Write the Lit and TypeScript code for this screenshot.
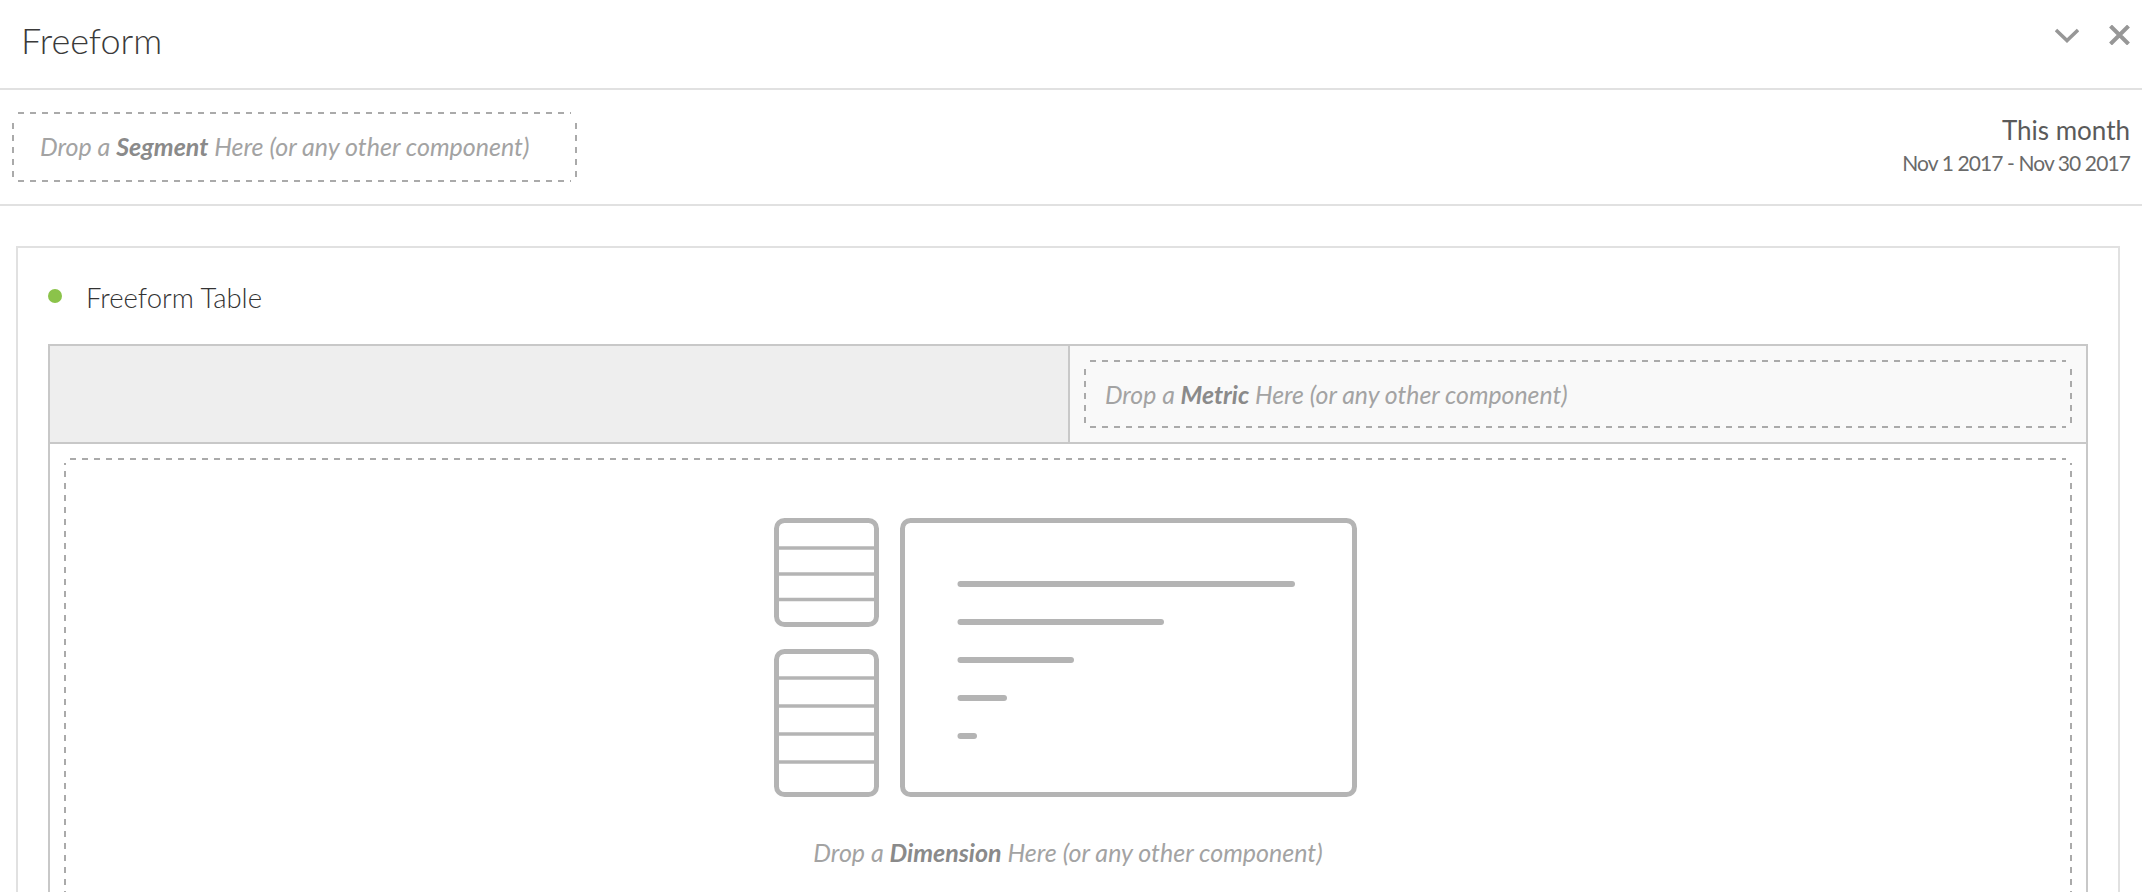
import { LitElement, html, css, svg } from "lit";
import { customElement } from "lit/decorators.js";

const dropLabel = (what: string) =>
  html`Drop a <b>${what}</b> Here (or any other component)`;

@customElement("app-root")
export class AppRoot extends LitElement {
  static styles = css`
    :host {
      display: block;
      width: 2142px;
      height: 892px;
      overflow: hidden;
      background: #fff;
      font-family: "Lato", "Open Sans", sans-serif;
      color: #3a3a3a;
    }
    .title-bar {
      box-sizing: border-box;
      height: 90px;
      border-bottom: 2px solid #e1e1e1;
      display: flex;
      align-items: flex-start;
      justify-content: space-between;
      padding: 19px 12px 0 21px;
    }
    .title {
      font-size: 36px;
      line-height: 42px;
      font-weight: 300;
    }
    .actions {
      display: flex;
      gap: 30px;
      align-items: flex-start;
      padding-top: 6px;
    }
    .actions svg {
      display: block;
    }
    .chevron {
      margin-top: 3px;
    }
    .filter-bar {
      box-sizing: border-box;
      height: 116px;
      border-bottom: 2px solid #e1e1e1;
      display: flex;
      justify-content: space-between;
      align-items: flex-start;
      padding: 22px 12px 0 12px;
    }
    .drop {
      box-sizing: border-box;
      font-style: italic;
      font-size: 25px;
      color: #a3a3a3;
      white-space: nowrap;
      background-image:
        repeating-linear-gradient(90deg, #aaa 0 6px, transparent 6px 12px),
        repeating-linear-gradient(90deg, #aaa 0 6px, transparent 6px 12px),
        repeating-linear-gradient(0deg, #aaa 0 6px, transparent 6px 12px),
        repeating-linear-gradient(0deg, #aaa 0 6px, transparent 6px 12px);
      background-repeat: no-repeat;
      background-size:
        calc(100% - 12px) 2px,
        calc(100% - 12px) 2px,
        2px calc(100% - 10px),
        2px calc(100% - 10px);
      background-position:
        center top,
        center bottom,
        left center,
        right center;
    }
    .drop b {
      color: #8a8a8a;
      font-weight: 700;
    }
    .segment {
      width: 565px;
      height: 70px;
      line-height: 69px;
      padding-left: 28px;
    }
    .range {
      text-align: right;
      padding-top: 2px;
    }
    .range-name {
      font-size: 26px;
      line-height: 32px;
      color: #5a5a5a;
      font-weight: 400;
    }
    .range-dates {
      font-size: 21px;
      line-height: 33px;
      letter-spacing: -0.9px;
      color: #6a6a6a;
      font-weight: 400;
    }
    .canvas {
      padding: 40px 22px 0 16px;
    }
    .panel {
      box-sizing: border-box;
      height: 700px;
      border: 2px solid #e1e1e1;
      padding: 30px 30px 0 30px;
    }
    .panel-title {
      display: flex;
      align-items: center;
      gap: 24px;
      height: 38px;
      font-size: 27.5px;
      font-weight: 300;
      color: #333;
      margin-bottom: 28px;
    }
    .dot {
      width: 14px;
      height: 14px;
      border-radius: 50%;
      background: #8bc34a;
      margin-top: -2px;
    }
    .table {
      border: 2px solid #c8c8c8;
      height: 640px;
      display: flex;
      flex-direction: column;
    }
    .head {
      display: flex;
      height: 96px;
      border-bottom: 2px solid #c8c8c8;
    }
    .head-left {
      width: 1018px;
      background: #eeeeee;
      border-right: 2px solid #c8c8c8;
    }
    .head-right {
      flex: 1;
      background: #f9f9f9;
      padding: 14px 14px 14px 14px;
      display: flex;
    }
    .metric {
      flex: 1;
      line-height: 70px;
      padding-left: 21px;
      font-size: 24.8px;
    }
    .body {
      flex: 1;
      padding: 14px 14px 0 14px;
      display: flex;
    }
    .dimension {
      flex: 1;
      display: flex;
      flex-direction: column;
      align-items: center;
      padding-top: 60px;
    }
    .dimension svg {
      display: block;
      margin-right: 5px;
    }
    .dimension-label {
      margin-top: 38px;
      line-height: 34px;
    }
  `;

  private illustration() {
    const row = (y: number) =>
      svg`<line x1="4" x2="102" y1=${y} y2=${y} stroke-width="3.5"></line>`;
    const bar = (x2: number, y: number) =>
      svg`<line x1="186.5" x2=${x2} y1=${y} y2=${y} stroke-width="6" stroke-linecap="round"></line>`;
    return html`<svg width="583" height="279" viewBox="0 0 583 279" fill="none" stroke="#b4b4b4">
      <rect x="2.5" y="2.5" width="100" height="104" rx="8" stroke-width="5"></rect>
      <rect x="2.5" y="133.5" width="100" height="143" rx="8" stroke-width="5"></rect>
      <rect x="128.5" y="2.5" width="452" height="274" rx="8" stroke-width="5"></rect>
      ${[30, 56, 81.5].map((y) => row(y))}
      ${[160, 188, 216, 244].map((y) => row(y))}
      ${bar(518, 66)}${bar(387, 104)}${bar(297, 142)}${bar(230, 180)}${bar(200, 218)}
    </svg>`;
  }

  render() {
    return html`
      <div class="title-bar">
        <div class="title">Freeform</div>
        <div class="actions">
          <svg class="chevron" width="24" height="15" viewBox="0 0 24 15" fill="none" stroke="#979797" stroke-width="3.5">
            <path d="M1 2 L12 12.5 L23 2"></path>
          </svg>
          <svg width="21" height="20" viewBox="0 0 21 20" fill="none" stroke="#979797" stroke-width="4">
            <path d="M1.5 1 L19.5 19 M19.5 1 L1.5 19"></path>
          </svg>
        </div>
      </div>
      <div class="filter-bar">
        <div class="drop segment">${dropLabel("Segment")}</div>
        <div class="range">
          <div class="range-name">This month</div>
          <div class="range-dates">Nov 1 2017 - Nov 30 2017</div>
        </div>
      </div>
      <div class="canvas">
        <div class="panel">
          <div class="panel-title"><span class="dot"></span><span>Freeform Table</span></div>
          <div class="table">
            <div class="head">
              <div class="head-left"></div>
              <div class="head-right">
                <div class="drop metric">${dropLabel("Metric")}</div>
              </div>
            </div>
            <div class="body">
              <div class="drop dimension">
                ${this.illustration()}
                <div class="dimension-label">${dropLabel("Dimension")}</div>
              </div>
            </div>
          </div>
        </div>
      </div>
    `;
  }
}
